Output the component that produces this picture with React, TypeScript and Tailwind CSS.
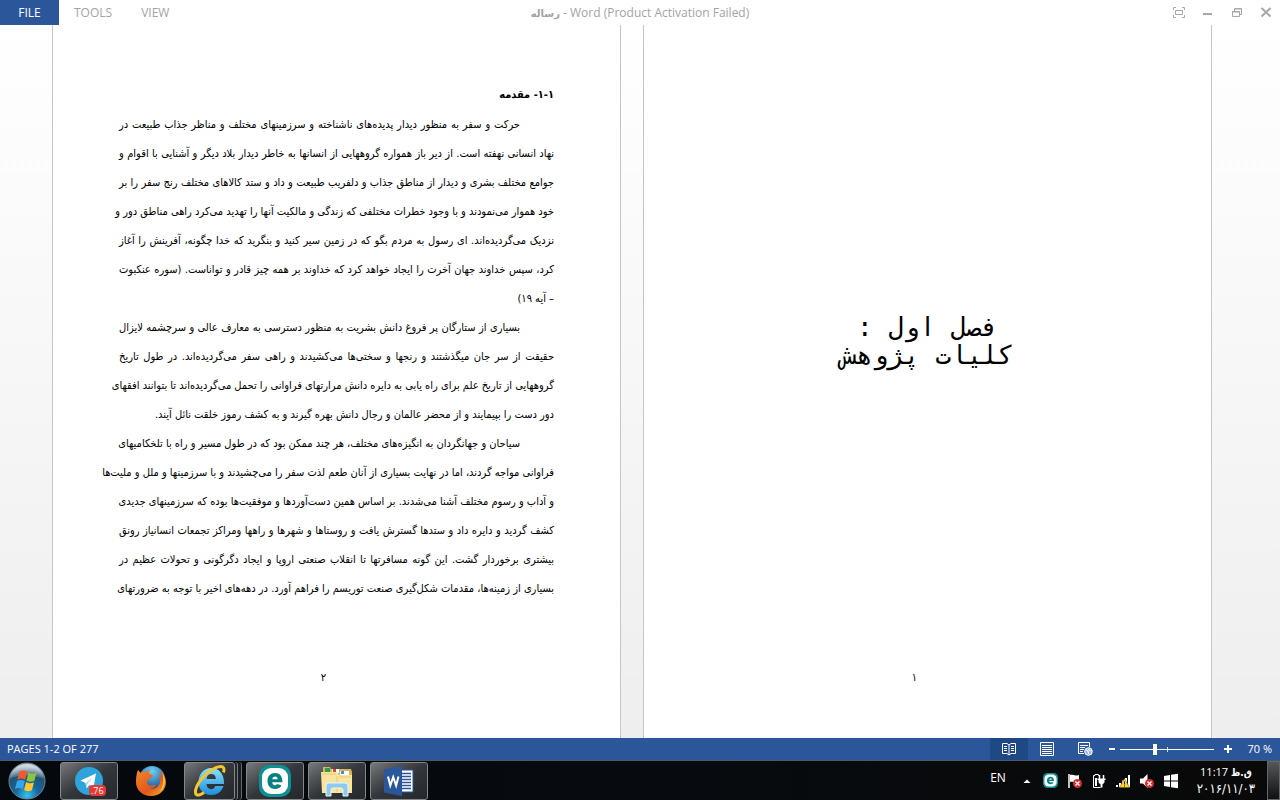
import type { ReactNode } from "react";

const paragraphs = [
  [
    "حرکت و سفر به  منظور دیدار پدیده‌های ناشناخته و سرزمینهای مختلف و مناظر جذاب طبیعت در",
    "نهاد انسانی نهفته است. از دیر باز همواره گروههایی از انسانها به خاطر دیدار بلاد دیگر و آشنایی با اقوام و",
    "جوامع مختلف بشری و دیدار از مناطق جذاب و دلفریب طبیعت و داد و ستد کالاهای مختلف رنج سفر را بر",
    "خود هموار می‌نمودند و با وجود خطرات مختلفی که زندگی و مالکیت آنها را تهدید می‌کرد راهی مناطق دور و",
    "نزدیک می‌گردیده‌اند. ای رسول به مردم بگو که در زمین سیر کنید و بنگرید که خدا چگونه، آفرینش را آغاز",
    "کرد، سپس خداوند جهان آخرت را ایجاد خواهد کرد که خداوند بر همه چیز قادر و تواناست. (سوره عنکبوت",
    "– آیه ۱۹)",
  ],
  [
    "بسیاری از ستارگان پر فروغ دانش بشریت به منظور دسترسی به معارف عالی و سرچشمه لایزال",
    "حقیقت از سر جان میگذشتند و رنجها و سختی‌ها می‌کشیدند و راهی سفر می‌گردیده‌اند. در طول تاریخ",
    "گروههایی از تاریخ علم برای راه یابی به دایره دانش مرارتهای فراوانی را تحمل می‌گردیده‌اند تا بتوانند افقهای",
    "دور دست را بپیمایند و از محضر عالمان و رجال دانش بهره گیرند و به کشف رموز خلقت نائل آیند.",
  ],
  [
    "سیاحان و جهانگردان به انگیزه‌های مختلف، هر چند ممکن بود که در طول مسیر و راه با تلخکامیهای",
    "فراوانی مواجه گردند، اما در نهایت بسیاری از آنان طعم لذت سفر را می‌چشیدند و با سرزمینها و ملل و ملیت‌ها",
    "و آداب و رسوم مختلف آشنا می‌شدند. بر اساس همین دست‌آوردها و موفقیت‌ها بوده که سرزمینهای جدیدی",
    "کشف گردید و دایره داد و ستدها گسترش یافت و روستاها و شهرها و راهها ومراکز تجمعات انسانیاز رونق",
    "بیشتری برخوردار گشت. این گونه مسافرتها تا انقلاب صنعتی اروپا و ایجاد دگرگونی و تحولات عظیم در",
    "بسیاری از زمینه‌ها، مقدمات شکل‌گیری صنعت توریسم را فراهم آورد. در دهه‌های اخیر با توجه به ضرورتهای",
  ],
];

const TitleBar = () => (
  <header className="grid h-[25px] shrink-0 grid-cols-[1fr_auto_1fr] items-stretch bg-white text-xs text-[#a3a3a3]">
    <nav className="flex">
      <button className="w-[59px] bg-[#2b579a] text-white">FILE</button>
      <button className="px-[15px]">TOOLS</button>
      <button className="px-[14px]">VIEW</button>
    </nav>
    <h1 className="self-center text-xs whitespace-nowrap">
      <span className="font-['DejaVu_Sans',sans-serif] text-[10px] font-bold">رساله</span> - Word (Product
      Activation Failed)
    </h1>
    <div className="flex justify-end">
      <WindowButton label="Full screen">
        <path d="M2.5 5V2.5H5M11 2.5h2.5V5M13.5 10v2.5H11M5 12.5H2.5V10M4.500 5.500h7v4h-7z" />
      </WindowButton>
      <WindowButton label="Minimize">
        <path d="M3 9h9" strokeWidth="2" />
      </WindowButton>
      <WindowButton label="Restore">
        <path d="M3.500 6.500h7v5h-7zM3 7h8M5.500 6V3.500h7v6H11M5 4h8" />
      </WindowButton>
      <WindowButton label="Close">
        <path d="M3.500 3l9 8.500M12.500 3l-9 8.500" strokeWidth="2" />
      </WindowButton>
    </div>
  </header>
);

const WindowButton = ({ label, children }: { label: string; children: ReactNode }) => (
  <button aria-label={label} className="flex w-[29px] items-center justify-center">
    <svg width="16" height="16" viewBox="0 0 16 16" fill="none" stroke="#a8a8a8">
      {children}
    </svg>
  </button>
);

const Sheet = ({ number, children }: { number: string; children: ReactNode }) => (
  <article
    dir="rtl"
    className="flex min-w-0 max-w-[569px] flex-1 flex-col border-x border-[#c6c6c6] bg-white px-[66px] font-['DejaVu_Sans_Condensed','DejaVu_Sans',sans-serif] text-black"
  >
    <div className="flex-1">{children}</div>
    <footer className="ps-[26px] pb-[50px] text-center text-[11px] leading-5">{number}</footer>
  </article>
);

const Document = () => (
  <main className="flex min-h-0 flex-1 justify-center gap-[22px] bg-linear-to-b from-white to-[#eeeeee] pr-[68px] pl-[52px]">
    <Sheet number="۲">
      <h2 className="mt-[60px] mb-[5px] text-[11px] leading-5 font-bold">۱-۱- مقدمه</h2>
      {paragraphs.map((lines, i) => (
        <p key={i} className="text-[11px] leading-[29px]">
          {lines.map((line, j) => (
            <span
              key={j}
              className={
                "block whitespace-nowrap " +
                (j === 0 ? "ps-[34px] " : "") +
                (line.endsWith("آیند.") || line.startsWith("–") ? "" : "[text-align-last:justify]")
              }
            >
              {line}
            </span>
          ))}
        </p>
      ))}
    </Sheet>
    <Sheet number="۱">
      <h2 className="mt-[288px] text-center font-['DejaVu_Sans_Mono',monospace] text-[26px] leading-7">
        فصل اول :
        <br />
        کلیات پژوهش
      </h2>
    </Sheet>
  </main>
);

const StatusBar = () => (
  <div className="flex h-[22px] shrink-0 items-center justify-between bg-[#2b579a] text-[11px] text-white">
    <span className="pl-[7px]">PAGES 1-2 OF 277</span>
    <div className="flex h-full items-center">
      <button aria-label="Read Mode" className="flex h-full w-[38px] items-center justify-center bg-[#1f4985]">
        <svg width="14" height="14" viewBox="0 0 14 14" fill="none" stroke="#fff">
          <path d="M.5 1.500H5l2 1.500 2-1.500h4.500v10H9L7 13l-2-1.500H.5zM7 3v10M2 4.500h3M2 6.500h3M2 8.500h3M9 4.500h3M9 6.500h3M9 8.500h3" />
        </svg>
      </button>
      <button aria-label="Print Layout" className="flex h-full w-[38px] items-center justify-center">
        <svg width="14" height="14" viewBox="0 0 14 14" fill="none" stroke="#fff">
          <path d="M.5.5h13v13H.5zM2 3.500h10M2 5.500h10M2 7.500h10M2 9.500h10M2 11.500h10" />
        </svg>
      </button>
      <button aria-label="Web Layout" className="flex h-full w-[38px] items-center justify-center">
        <svg width="15" height="14" viewBox="0 0 15 14" fill="none" stroke="#fff">
          <path d="M6 11.500H.5V.5h11V5M2 3.500h8M2 5.500h5M2 7.500h4M2 9.500h3" />
          <circle cx="10.500" cy="9.500" r="3.800" fill="#9db6dc" />
          <path d="M8 8l2 1 .5 3M11 6.500l-.5 1.500 3 1" />
        </svg>
      </button>
      <button aria-label="Zoom out" className="flex h-full w-4 items-center justify-center">
        <span className="h-0.5 w-1.5 bg-white" />
      </button>
      <div className="relative flex w-[94px] items-center">
        <input
          type="range"
          aria-label="Zoom"
          min={10}
          max={180}
          defaultValue={73}
          className="h-[11px] w-full appearance-none bg-transparent [&::-webkit-slider-runnable-track]:h-px [&::-webkit-slider-runnable-track]:bg-white [&::-webkit-slider-thumb]:-mt-[5px] [&::-webkit-slider-thumb]:h-[11px] [&::-webkit-slider-thumb]:w-1 [&::-webkit-slider-thumb]:appearance-none [&::-webkit-slider-thumb]:bg-white"
        />
        <span className="absolute left-1/2 h-[5px] w-px bg-white/80" />
      </div>
      <button aria-label="Zoom in" className="flex h-full w-7 items-center justify-center">
        <svg width="8" height="8" viewBox="0 0 8 8" stroke="#fff" strokeWidth="2">
          <path d="M0 4h8M4 0v8" />
        </svg>
      </button>
      <button className="w-[38px] pr-2 text-right whitespace-nowrap">70 %</button>
    </div>
  </div>
);

const EsetMark = ({ size }: { size: number }) => (
  <svg width={size} height={size} viewBox="0 0 32 32">
    <rect x="0" y="0" width="32" height="32" rx="10" fill="#0b9093" />
    <rect x="3" y="3" width="26" height="26" rx="9" fill="#fff" />
    <path
      d="M22.500 20.500c-1.300 2.300-3.400 3.500-6.400 3.500-4.700 0-7.600-3.100-7.600-8s2.900-8 7.600-8 7.400 3.300 7.400 9.200H13.200c.2 2 1.200 3.100 3 3.100 1.200 0 2-.4 2.400-1.200zM13.300 14.300h5.400c-.2-1.800-1.100-2.700-2.600-2.700s-2.500.9-2.800 2.700z"
      fill="#078083"
    />
  </svg>
);

const StartOrb = () => (
  <svg width="40" height="38" viewBox="0 0 40 38">
    <defs>
      <radialGradient id="orb" cx=".5" cy=".9" r=".8">
        <stop offset="0" stopColor="#35c3ee" />
        <stop offset=".4" stopColor="#17679f" />
        <stop offset=".8" stopColor="#24506f" />
        <stop offset="1" stopColor="#8ca2b0" />
      </radialGradient>
      <linearGradient id="orbShine" x1="0" y1="0" x2="0" y2="1">
        <stop offset="0" stopColor="#fff" stopOpacity=".65" />
        <stop offset="1" stopColor="#fff" stopOpacity=".1" />
      </linearGradient>
    </defs>
    <circle cx="20" cy="19" r="18" fill="url(#orb)" stroke="#6e8797" />
    <path d="M3 17C4 8 11 2 20 2s16 6 17 15c-8-4-25-5-34 0z" fill="url(#orbShine)" />
    <path d="M12.500 9.500c2.800-1.500 5.200-1.200 7.700.3l-2 8c-2.600-1.500-5.100-1.700-7.800-.3z" fill="#f0592b" />
    <path d="M21.500 10.500c2.600 1.500 5.200 1.700 8 .3l-2.100 8c-2.800 1.400-5.300 1.200-7.900-.3z" fill="#8cc63f" />
    <path d="M10 19c2.700-1.400 5.200-1.200 7.800.3l-2.100 8c-2.500-1.500-4.900-1.700-7.700-.3z" fill="#35a5e5" />
    <path d="M19.100 20c2.600 1.500 5.200 1.700 7.900.3l-2.100 8c-2.700 1.400-5.200 1.200-7.800-.3z" fill="#fcc62c" />
  </svg>
);

const FirefoxIcon = () => (
  <svg width="32" height="32" viewBox="0 0 32 32">
    <defs>
      <radialGradient id="globe" cx=".5" cy=".2" r=".8">
        <stop offset="0" stopColor="#6ed0f5" />
        <stop offset="1" stopColor="#12418a" />
      </radialGradient>
      <linearGradient id="fox" x1="0" y1="0" x2="1" y2="1">
        <stop offset="0" stopColor="#f08a24" />
        <stop offset=".6" stopColor="#e4571c" />
        <stop offset="1" stopColor="#f9b52c" />
      </linearGradient>
    </defs>
    <circle cx="17" cy="14" r="13" fill="url(#globe)" />
    <path
      d="M3 5c1 1 2 2 2.500 3C7 7 9 6.500 11 7c1.500-1.800 3-2.500 4.500-2.500C14 6 13.700 7.500 14 9c1 1 3 .8 4 1.500 0 1.500-2 2-3.500 3 .5 1.500-.5 2-2 1.700C11 18 13 21 16.500 20.500c1.500-.2 3-1.500 4.500-.5-1 2.500-4 3.500-6 3.500 5 1.500 10-2 10-8 0-3-1-5-2-6.500 2 1 3 2 4 4 0-3-1.500-6-3-8 4 2.500 7 7 7 12 0 8-6.500 14-15 14S1 25 1 17C1 13 1.500 8 3 5z"
      fill="url(#fox)"
    />
    <path d="M27.500 8c4 6 3 15-3 19 3-4 5-9 3-19z" fill="#fcd04b" />
  </svg>
);

const ExplorerIcon = () => (
  <svg width="36" height="34" viewBox="0 0 36 34">
    <defs>
      <linearGradient id="ie" x1="0" y1="0" x2="0" y2="1">
        <stop offset="0" stopColor="#8ce1fb" />
        <stop offset="1" stopColor="#1b8fdc" />
      </linearGradient>
    </defs>
    <path
      d="M31.500 22c-1.800 5.800-6.500 9-12.500 9C11.500 31 6.500 25.500 6.500 18S11.500 4 19 4s13.500 5.500 13 16H14.500c.2 3.400 1.800 5.200 4.800 5.200 2 0 3.400-1.200 4-3.200zM14.600 15h9.300c-.2-3.200-1.800-4.900-4.600-4.900s-4.400 1.800-4.700 4.900z"
      fill="url(#ie)"
    />
    <path
      d="M31.500 8.500c1.200-3.500.4-6-2.500-6C22.500 2.500 10 11.500 5 22c-2.600 5.500-2 9.800 2 9 1.500-.3 3-1 5-2.500"
      fill="none"
      stroke="#f7c52d"
      strokeWidth="3"
    />
  </svg>
);

const FolderIcon = () => (
  <svg width="34" height="32" viewBox="0 0 34 32">
    <path d="M3 2h7l1 2h20l1 3v21H3z" fill="#d9b45b" />
    <path d="M5 3h5v4H5z" fill="#2e9b46" />
    <path d="M12 4h7v4h-7z" fill="#fff" />
    <path d="M13 4h3v3h-3z" fill="#d9452b" />
    <path d="M20 6h9v4h-9z" fill="#fff" />
    <path d="M21 6h3v3h-3z" fill="#3b8ee0" />
    <path d="M1 7h16l2 3h13v18H2z" fill="#f8e3a0" />
    <path d="M2 9h14M19 12h12M17 11v16" stroke="#e8c877" fill="none" />
    <path d="M6 31V21q0-3 3-3h16q3 0 3 3v10h-5v-6q0-2-2-2h-8q-2 0-2 2v6z" fill="#8dcbee" stroke="#e6f6ff" />
  </svg>
);

const WordIcon = () => (
  <svg width="30" height="30" viewBox="0 0 30 30">
    <path d="M17 4h12v22H17z" fill="#fff" stroke="#2b579a" />
    <path d="M18 7.500h9M18 10.500h9M18 13.500h9M18 16.500h9M18 19.500h9M18 22.500h9" stroke="#2b579a" strokeWidth="1.500" />
    <path d="M0 3.500L18 0v30L0 26.500z" fill="#2b579a" />
    <path d="M4 10.500l2.300 9 2.900-8.500 2.900 8.500 2.400-9" fill="none" stroke="#fff" strokeWidth="2" />
  </svg>
);

const TelegramIcon = () => (
  <span className="relative">
    <svg width="28" height="28" viewBox="0 0 28 28">
      <circle cx="14" cy="14" r="14" fill="#2fa3dc" />
      <path d="M21 6.500L5.500 13.500l5 2.500 1 5.500 3-3.500 4 2.500z" fill="#fff" />
      <path d="M10.500 16L18 10l-5.500 7-1 4.500z" fill="#b8d8eb" />
    </svg>
    <span className="absolute top-[18px] left-[14px] rounded-sm bg-[#e53935] px-0.5 text-[9px] leading-[11px] text-white">
      .76
    </span>
  </span>
);

const TaskButton = ({ label, children }: { label: string; children: ReactNode }) => (
  <button
    aria-label={label}
    className="flex h-[38px] w-[58px] items-center justify-center rounded-[3px] border border-[#85888b] bg-linear-to-br from-[#77797b] via-[#33363a] to-[#24272b]"
  >
    {children}
  </button>
);

const RedBadge = () => (
  <>
    <circle cx="10.500" cy="10.500" r="4.500" fill="#d92b2b" />
    <path d="M8.500 8.500l4 4M12.500 8.500l-4 4" stroke="#fff" strokeWidth="1.300" />
  </>
);

const TrayButton = ({ label, children }: { label: string; children: ReactNode }) => (
  <button aria-label={label} className="flex h-full w-6 items-center justify-center">
    <svg width="16" height="16" viewBox="0 0 16 16" fill="none">
      {children}
    </svg>
  </button>
);

const Taskbar = () => (
  <footer className="flex h-10 shrink-0 items-center justify-between border-t border-[#4d5968] bg-linear-to-r from-[#05090e] via-[#070b0f] to-[#090909] text-white">
    <div className="flex items-center">
      <button aria-label="Start" className="flex w-[60px] pl-[7px]">
        <StartOrb />
      </button>
      <TaskButton label="Telegram">
        <TelegramIcon />
      </TaskButton>
      <button aria-label="Firefox" className="flex w-[66px] items-center justify-center">
        <FirefoxIcon />
      </button>
      <div className="mr-1 flex">
        <button
          aria-label="Internet Explorer"
          className="flex h-[38px] w-[51px] items-center justify-center rounded-[3px] border border-[#85888b] bg-linear-to-br from-[#77797b] via-[#33363a] to-[#24272b]"
        >
          <ExplorerIcon />
        </button>
        <span className="w-[3px] rounded-r-[3px] border-r border-[#777a7d] bg-[#24272b]" />
        <span className="w-1 rounded-r-[3px] border-r border-[#66696c] bg-[#1b1e22]" />
      </div>
      <div className="flex gap-1">
        <TaskButton label="ESET">
          <EsetMark size={32} />
        </TaskButton>
        <TaskButton label="File Explorer">
          <FolderIcon />
        </TaskButton>
        <TaskButton label="Word">
          <WordIcon />
        </TaskButton>
      </div>
    </div>
    <div className="flex h-full items-center">
      <button className="mr-[9px] pb-1.5 text-xs">EN</button>
      <TrayButton label="Show hidden icons">
        <path d="M4.500 10L8 6.500l3.500 3.500z" fill="#fff" />
      </TrayButton>
      <button aria-label="ESET status" className="flex w-6 justify-center">
        <EsetMark size={15} />
      </button>
      <TrayButton label="Action Center">
        <path d="M2 1v14" stroke="#fff" strokeWidth="1.500" />
        <path d="M3 2c3-1 4 1.500 9 0v7c-5 1.500-6-1-9 0z" fill="#fff" />
        <RedBadge />
      </TrayButton>
      <TrayButton label="Power">
        <path d="M7.500 14.500h-5v-12H4v-1h3.500v1H9M9.500 14.500h-3" stroke="#fff" />
        <path d="M4 5h2v8H4z" fill="#fff" />
        <path d="M8.500 2v4M12.500 2v4" stroke="#fff" strokeWidth="1.500" />
        <path d="M6.500 5.500h8V7h-1v2q0 1.500-2 2v3.500h-2V11q-2-.5-2-2V7h-1z" fill="#fff" />
      </TrayButton>
      <TrayButton label="Network">
        <path d="M2 12v2M5 10v4M8 7.500V14M11 5v9M14 2v12" stroke="#fff" strokeWidth="2" />
        <path d="M9.500 5.500l5 9h-10z" fill="#fbd12c" stroke="#6d5a00" strokeWidth=".5" />
        <path d="M9.500 8.500v3M9.500 12.500v1" stroke="#222" />
      </TrayButton>
      <TrayButton label="Volume">
        <path d="M1 5.500h3L8.500 1v14L4 10.500H1z" fill="#fff" />
        <RedBadge />
      </TrayButton>
      <TrayButton label="Get Windows 10">
        <path d="M1 3l6-1v5.500H1zM8 1.800l7-1v6.700H8zM1 8.500h6V14l-6-1zM8 8.500h7v6.700l-7-1z" fill="#fff" />
      </TrayButton>
      <button className="mr-3 ml-3.5 text-center text-[11px] leading-4">
        <span className="block">
          11:17 <span className="font-['DejaVu_Sans_Condensed','DejaVu_Sans',sans-serif] text-[10px] font-bold">ق.ظ</span>
        </span>
        <span className="block font-['DejaVu_Sans_Condensed','DejaVu_Sans',sans-serif] text-[13px]">۲۰۱۶/۱۱/۰۳</span>
      </button>
      <button
        aria-label="Show desktop"
        className="h-full w-[13px] border border-[#63666a] bg-linear-to-b from-[#55585b] to-[#111]"
      />
    </div>
  </footer>
);

const App = () => {
  return (
    <div className="flex h-screen flex-col overflow-hidden bg-white font-['Open_Sans','Noto_Sans',sans-serif]">
      <TitleBar />
      <Document />
      <StatusBar />
      <Taskbar />
    </div>
  );
};

export default App;
